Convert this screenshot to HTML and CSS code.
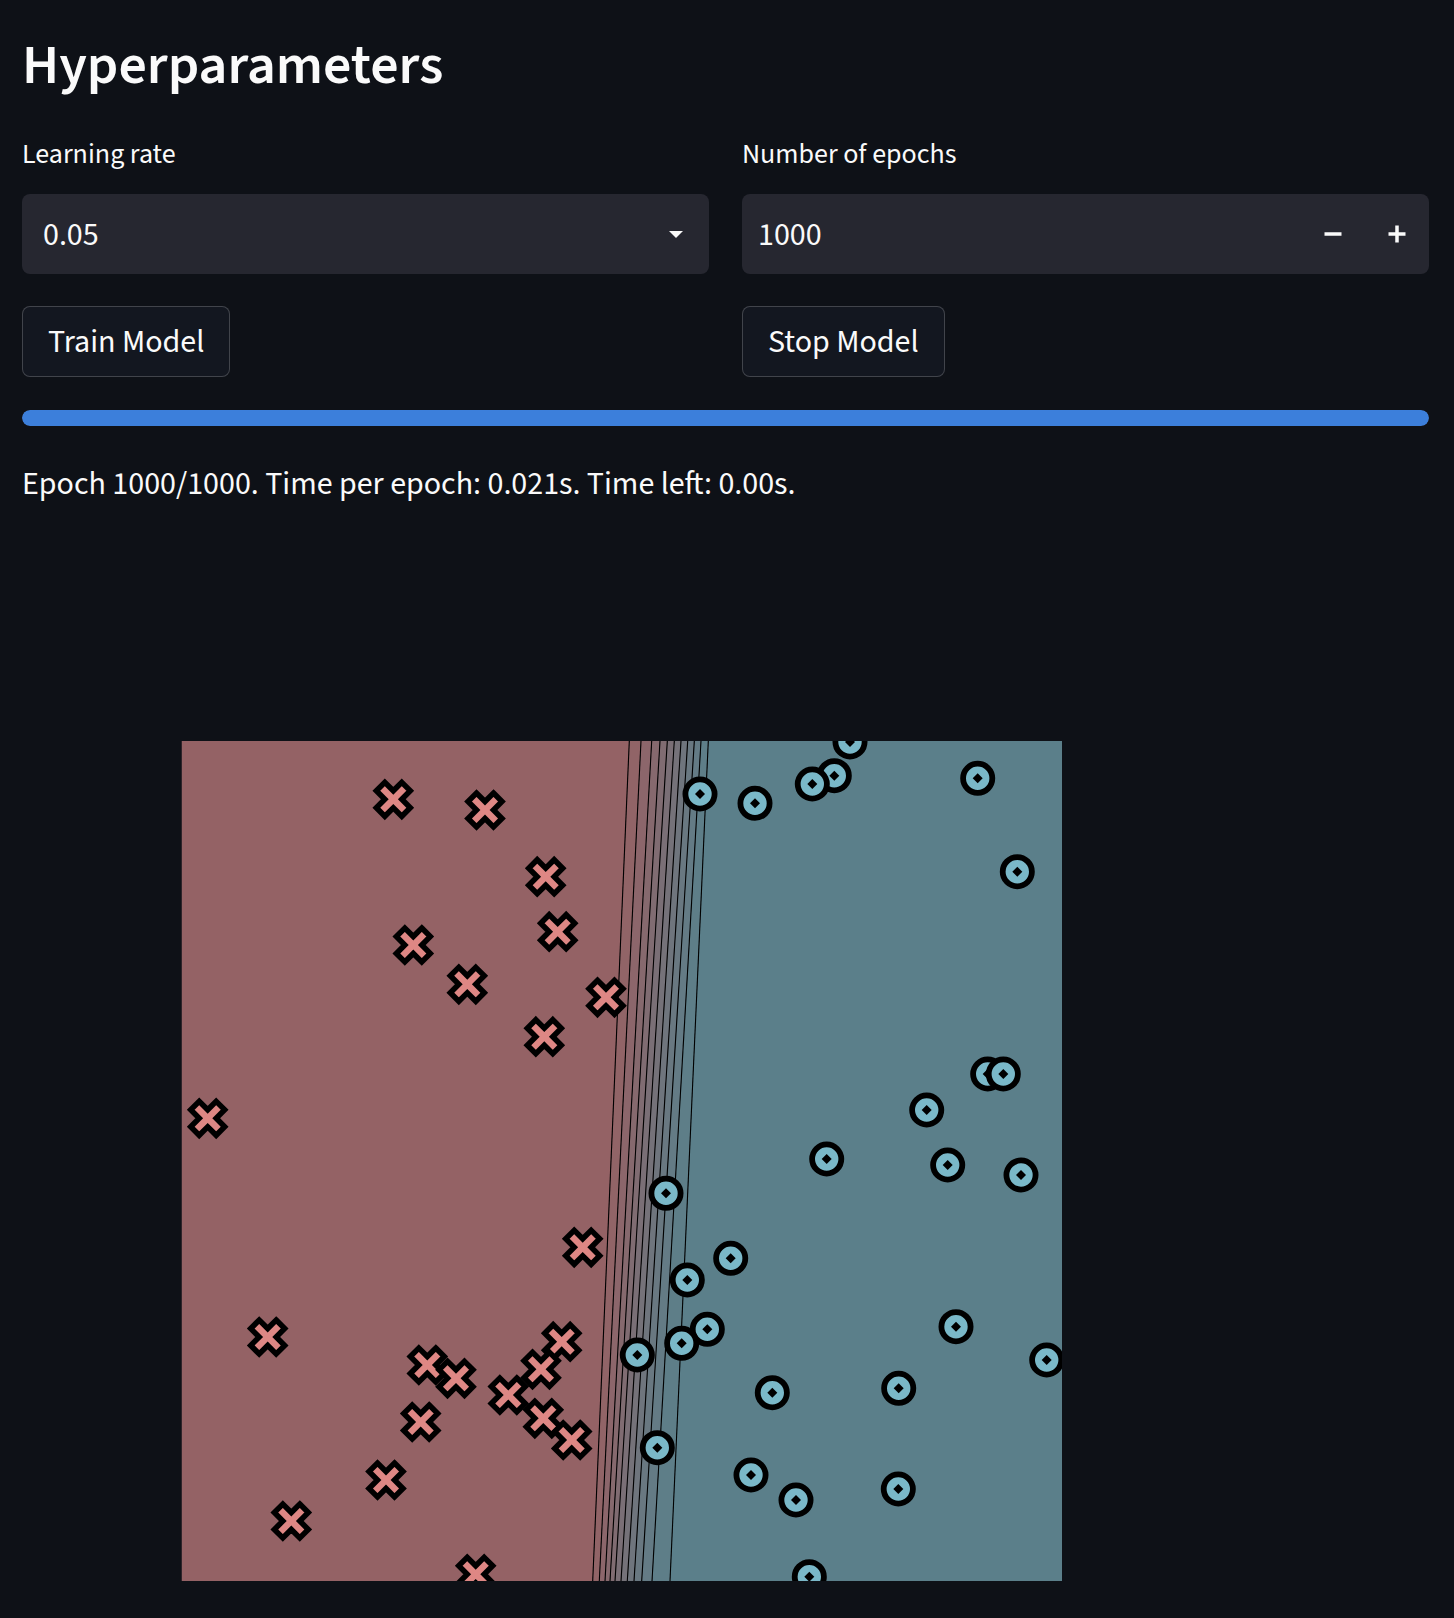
FILE: index.html
```html
<!DOCTYPE html>
<html lang="en">
<head>
<meta charset="utf-8">
<title>Hyperparameters</title>
<link rel="stylesheet" href="styles.css">
</head>
<body>
<main class="page">
  <h3 class="title">Hyperparameters</h3>
  <div class="cols">
    <div class="col">
      <label class="label">Learning rate</label>
      <div class="select">
        <span class="value">0.05</span>
        <svg class="caret" width="14" height="7" viewBox="0 0 14 7"><path d="M0 0H14L7 7Z" fill="#fafafa"/></svg>
      </div>
      <div class="btn-row"><button class="btn">Train Model</button></div>
    </div>
    <div class="col">
      <label class="label">Number of epochs</label>
      <div class="number">
        <span class="value">1000</span>
        <div class="steps">
          <button class="step" aria-label="Decrement"><svg width="18" height="18" viewBox="0 0 18 18"><rect x="0.5" y="7.25" width="17" height="3.5" fill="#fafafa"/></svg></button>
          <button class="step" aria-label="Increment"><svg width="18" height="18" viewBox="0 0 18 18"><rect x="0.5" y="7.25" width="17" height="3.5" fill="#fafafa"/><rect x="7.25" y="0.5" width="3.5" height="17" fill="#fafafa"/></svg></button>
        </div>
      </div>
      <div class="btn-row"><button class="btn">Stop Model</button></div>
    </div>
  </div>
  <div class="progress"><div class="progress-fill" style="width:100%"></div></div>
  <p class="status">Epoch 1000/1000. Time per epoch: 0.021s. Time left: 0.00s.</p>
  <div class="figure">
    <svg width="1407" height="1098" viewBox="22 520 1407 1098" xmlns="http://www.w3.org/2000/svg">
      <defs>
        <clipPath id="plotclip"><rect x="181.5" y="741" width="880.5" height="840"/></clipPath>
        <g id="mx"><polygon points="-6,-18 6,-18 6,-6 18,-6 18,6 6,6 6,18 -6,18 -6,6 -18,6 -18,-6 -6,-6" transform="rotate(45)" fill="#de8784" stroke="#000" stroke-width="5.5" stroke-linejoin="miter"/></g>
        <g id="mo"><circle r="14.6" fill="#7ab8c8" stroke="#000" stroke-width="5.8"/><polygon points="0,-5 5,0 0,5 -5,0" fill="#000"/></g>
      </defs>
      <g clip-path="url(#plotclip)">
        <polygon points="181.5,741 629.3,741 592.7,1581 181.5,1581" fill="#946265"/>
        <polygon points="629.3,741 641,741 599.3,1581 592.7,1581" fill="#916467"/>
        <polygon points="641,741 651.7,741 605,1581 599.3,1581" fill="#8c666b"/>
        <polygon points="651.7,741 660,741 610,1581 605,1581" fill="#86696e"/>
        <polygon points="660,741 667.3,741 615,1581 610,1581" fill="#806c72"/>
        <polygon points="667.3,741 674.3,741 621,1581 615,1581" fill="#7a6f76"/>
        <polygon points="674.3,741 681,741 627.3,1581 621,1581" fill="#757279"/>
        <polygon points="681,741 687.7,741 634,1581 627.3,1581" fill="#6f757d"/>
        <polygon points="687.7,741 694.3,741 641.7,1581 634,1581" fill="#697881"/>
        <polygon points="694.3,741 701,741 652,1581 641.7,1581" fill="#647b85"/>
        <polygon points="701,741 708.3,741 670,1581 652,1581" fill="#5e7e88"/>
        <polygon points="708.3,741 1062,741 1062,1581 670,1581" fill="#5b7f8a"/>
        <g stroke="#000" stroke-width="1.1">
          <line x1="629.3" y1="741" x2="592.7" y2="1581"/>
          <line x1="641" y1="741" x2="599.3" y2="1581"/>
          <line x1="651.7" y1="741" x2="605" y2="1581"/>
          <line x1="660" y1="741" x2="610" y2="1581"/>
          <line x1="667.3" y1="741" x2="615" y2="1581"/>
          <line x1="674.3" y1="741" x2="621" y2="1581"/>
          <line x1="681" y1="741" x2="627.3" y2="1581"/>
          <line x1="687.7" y1="741" x2="634" y2="1581"/>
          <line x1="694.3" y1="741" x2="641.7" y2="1581"/>
          <line x1="701" y1="741" x2="652" y2="1581"/>
          <line x1="708.3" y1="741" x2="670" y2="1581"/>
        </g>
        <use href="#mx" x="393.3" y="799.3"/>
        <use href="#mx" x="485" y="810"/>
        <use href="#mx" x="545.7" y="876.7"/>
        <use href="#mx" x="557.7" y="931.7"/>
        <use href="#mx" x="413.3" y="945"/>
        <use href="#mx" x="467.3" y="984.3"/>
        <use href="#mx" x="606" y="997.3"/>
        <use href="#mx" x="544.3" y="1036.7"/>
        <use href="#mx" x="207.7" y="1118.3"/>
        <use href="#mx" x="582.7" y="1247.3"/>
        <use href="#mx" x="267.7" y="1337"/>
        <use href="#mx" x="561.7" y="1341.7"/>
        <use href="#mx" x="427.3" y="1365"/>
        <use href="#mx" x="456" y="1378.3"/>
        <use href="#mx" x="541" y="1369.3"/>
        <use href="#mx" x="508.3" y="1395"/>
        <use href="#mx" x="420.7" y="1422"/>
        <use href="#mx" x="543.3" y="1418.3"/>
        <use href="#mx" x="571.7" y="1440"/>
        <use href="#mx" x="386" y="1480"/>
        <use href="#mx" x="291.3" y="1521"/>
        <use href="#mx" x="475.7" y="1574.3"/>
        <use href="#mo" x="850" y="742"/>
        <use href="#mo" x="700" y="794"/>
        <use href="#mo" x="755" y="803.3"/>
        <use href="#mo" x="834.3" y="775.7"/>
        <use href="#mo" x="812.3" y="784"/>
        <use href="#mo" x="977.7" y="778.3"/>
        <use href="#mo" x="1017.3" y="871.7"/>
        <use href="#mo" x="987.7" y="1074"/>
        <use href="#mo" x="1003.3" y="1074"/>
        <use href="#mo" x="926.7" y="1110"/>
        <use href="#mo" x="826.7" y="1159"/>
        <use href="#mo" x="947.7" y="1165"/>
        <use href="#mo" x="1021" y="1175"/>
        <use href="#mo" x="666" y="1193.3"/>
        <use href="#mo" x="730.7" y="1258.3"/>
        <use href="#mo" x="687.3" y="1280"/>
        <use href="#mo" x="707.3" y="1329.3"/>
        <use href="#mo" x="681.7" y="1343.3"/>
        <use href="#mo" x="637.3" y="1355"/>
        <use href="#mo" x="956" y="1326.7"/>
        <use href="#mo" x="1046.7" y="1360"/>
        <use href="#mo" x="772.3" y="1392.7"/>
        <use href="#mo" x="898.7" y="1388.3"/>
        <use href="#mo" x="657.3" y="1447.7"/>
        <use href="#mo" x="751" y="1475"/>
        <use href="#mo" x="796" y="1500"/>
        <use href="#mo" x="898.3" y="1489"/>
        <use href="#mo" x="809.3" y="1576.7"/>
      </g>
    </svg>
  </div>
</main>
</body>
</html>
```

FILE: styles.css
```css
* { box-sizing: border-box; }
html, body { margin: 0; background: #0e1117; }
body { color: #fafafa; font-family: "Source Sans 3", Lato, "Noto Sans", sans-serif; overflow: hidden; }
.page { padding: 35px 25px 0 22px; }
.title { margin: 0; font-size: 56px; line-height: 61px; font-weight: 600; }
.cols { display: grid; grid-template-columns: 1fr 1fr; column-gap: 33px; margin-top: 40px; }
.label { display: block; font-size: 28px; line-height: 36px; margin-bottom: 22px; }
.select, .number { height: 80px; background: #262730; border-radius: 8px; display: flex; align-items: center; padding-top: 2px; }
.select { padding-left: 21px; padding-right: 26px; justify-content: space-between; }
.number { padding-left: 16px; }
.value { font-size: 32px; line-height: 60px; }
.number .value { flex: 1; }
.caret { display: block; margin-bottom: 2px; }
.steps { display: flex; align-self: stretch; margin-top: -2px; }
.step { width: 64px; background: transparent; border: 0; padding: 0; display: flex; align-items: center; justify-content: center; }
.step svg { display: block; }
.btn-row { margin-top: 32px; }
.btn { height: 71px; padding: 2px 25px 0; background: #131720; border: 1px solid rgba(250, 250, 250, 0.2); border-radius: 8px; color: #fafafa; font-family: inherit; font-size: 32px; line-height: 67px; }
.progress { margin-top: 33px; height: 16px; border-radius: 8px; background: #262730; overflow: hidden; }
.progress-fill { height: 100%; background: #3c7fdb; border-radius: 8px; }
.status { margin: 38px 0 0; font-size: 32px; line-height: 40px; }
.figure { margin-top: 16px; }
.figure svg { display: block; }
```
